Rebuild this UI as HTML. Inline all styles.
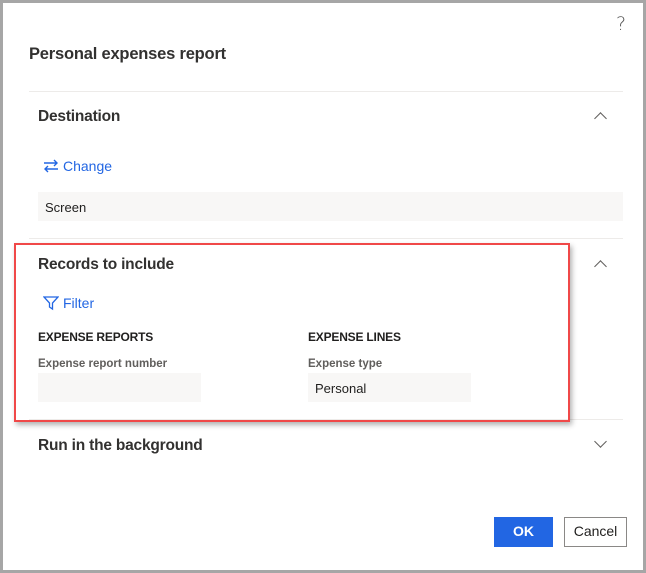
<!DOCTYPE html>
<html><head><style>
body{margin:0;width:646px;height:573px;position:relative;background:#fff;font-family:"Liberation Sans",sans-serif;color:#201f1e;overflow:hidden}
.frame{position:absolute;left:0;top:0;width:640px;height:567px;border:3px solid #a6a6a6}
.a{position:absolute;white-space:nowrap}
.h{font-size:15.5px;font-weight:bold;color:#323130;letter-spacing:-0.2px}
.line{position:absolute;height:1px;background:#edebe9}
.chev{position:absolute;width:8px;height:8px;border-left:1.3px solid #605e5c;border-top:1.3px solid #605e5c}
.inp{position:absolute;background:#f8f7f6;font-size:13px}
.blue{color:#2266e3;font-size:14px}
.lbl{font-size:11.5px;color:#605e5c;font-weight:bold}
.sec{font-size:12px;font-weight:bold;color:#201f1e;letter-spacing:-0.2px}
</style></head><body>
<div class="frame"></div>
<div class="a" style="left:616px;top:13px;font-size:19px;color:#555;font-family:'DejaVu Sans';font-weight:200">?</div>
<div class="a" style="left:29px;top:45px;font-size:16.5px;font-weight:bold;color:#323130;letter-spacing:-0.2px">Personal expenses report</div>
<div class="line" style="left:29px;top:91px;width:594px"></div>
<div class="a h" style="left:38px;top:108px">Destination</div>
<div class="chev" style="left:596px;top:114px;transform:rotate(45deg)"></div>
<svg class="a" style="left:43px;top:159px" width="16" height="14" viewBox="0 0 16 14"><path d="M1 4h13M11 1l3 3-3 3M15 10H2M5 7l-3 3 3 3" fill="none" stroke="#2266e3" stroke-width="1.4"/></svg>
<div class="a blue" style="left:63px;top:158px">Change</div>
<div class="inp" style="left:38px;top:192px;width:585px;height:29px"><span style="position:absolute;left:7px;top:8px">Screen</span></div>
<div class="line" style="left:29px;top:238px;width:594px"></div>
<div class="a h" style="left:38px;top:256px">Records to include</div>
<div class="chev" style="left:596px;top:262px;transform:rotate(45deg)"></div>
<svg class="a" style="left:43px;top:295px" width="16" height="16" viewBox="0 0 16 16"><path d="M1 2h14l-5.5 6v6l-3-2V8z" fill="none" stroke="#2266e3" stroke-width="1.3"/></svg>
<div class="a blue" style="left:63px;top:295px">Filter</div>
<div class="a sec" style="left:38px;top:330px">EXPENSE REPORTS</div>
<div class="a sec" style="left:308px;top:330px">EXPENSE LINES</div>
<div class="a lbl" style="left:38px;top:358px">Expense report number</div>
<div class="a lbl" style="left:308px;top:358px">Expense type</div>
<div class="inp" style="left:38px;top:373px;width:163px;height:29px"></div>
<div class="inp" style="left:308px;top:373px;width:163px;height:29px"><span style="position:absolute;left:7px;top:8px">Personal</span></div>
<div class="line" style="left:29px;top:419px;width:594px"></div>
<div class="a h" style="left:38px;top:437px">Run in the background</div>
<div class="chev" style="left:596px;top:437px;transform:rotate(225deg)"></div>
<div class="a" style="left:14px;top:243px;width:552px;height:175px;border:2px solid #f04848;box-shadow:2px 3px 5px rgba(0,0,0,.3)"></div>
<div class="a" style="left:494px;top:517px;width:59px;height:30px;background:#2266e3;color:#fff;font-size:14px;font-weight:bold;text-align:center;line-height:29px">OK</div>
<div class="a" style="left:564px;top:517px;width:61px;height:28px;border:1px solid #8a8886;font-size:14px;text-align:center;line-height:27px">Cancel</div>
</body></html>
